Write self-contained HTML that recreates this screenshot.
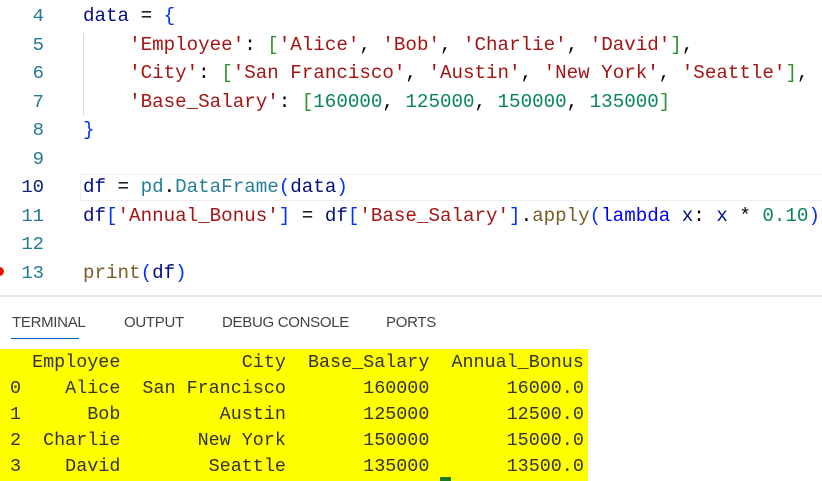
<!DOCTYPE html>
<html><head><style>
body{margin:0;width:822px;height:481px;overflow:hidden;background:#fff;position:relative;font-family:"Liberation Mono",monospace}
.ln{position:absolute;left:0;width:44px;text-align:right;color:#237893;font-size:18.9px;line-height:28.5px}
.code{position:absolute;left:83px;font-size:19.2px;line-height:28.5px;white-space:pre;color:#000}
.s{color:#a31515}.n{color:#098658}.b1{color:#0431fa}.b2{color:#319331}.v{color:#001080}.t{color:#267f99}.f{color:#795e26}.k{color:#0000ff}
.tab{position:absolute;top:314px;font-family:"Liberation Sans",sans-serif;font-size:15px;color:#424242;letter-spacing:-0.3px}
.term{position:absolute;left:0;top:349px;width:588px;height:132px;background:#ffff00}
.tl{position:absolute;left:10px;top:350px;font-size:18.4px;line-height:26px;white-space:pre;color:#333}
</style></head><body>
<div style="position:absolute;left:80px;top:174px;width:742px;height:25px;border:1px solid #eeeeee;border-right:none"></div>
<div style="position:absolute;left:83px;top:33px;width:1px;height:82px;background:#d8d8d8"></div>
<div class="ln" style="top:2px">4<br>5<br>6<br>7<br>8<br>9<br><span style="color:#0b216f">10</span><br>11<br>12<br>13</div>
<div style="position:absolute;left:-5px;top:267px;width:9px;height:9px;border-radius:50%;background:#e51400"></div>
<div class="code" style="top:2px"><span class="v">data</span> = <span class="b1">{</span>
    <span class="s">'Employee'</span>: <span class="b2">[</span><span class="s">'Alice'</span>, <span class="s">'Bob'</span>, <span class="s">'Charlie'</span>, <span class="s">'David'</span><span class="b2">]</span>,
    <span class="s">'City'</span>: <span class="b2">[</span><span class="s">'San Francisco'</span>, <span class="s">'Austin'</span>, <span class="s">'New York'</span>, <span class="s">'Seattle'</span><span class="b2">]</span>,
    <span class="s">'Base_Salary'</span>: <span class="b2">[</span><span class="n">160000</span>, <span class="n">125000</span>, <span class="n">150000</span>, <span class="n">135000</span><span class="b2">]</span>
<span class="b1">}</span>

<span class="v">df</span> = <span class="t">pd</span>.<span class="t">DataFrame</span><span class="b1">(</span><span class="v">data</span><span class="b1">)</span>
<span class="v">df</span><span class="b1">[</span><span class="s">'Annual_Bonus'</span><span class="b1">]</span> = <span class="v">df</span><span class="b1">[</span><span class="s">'Base_Salary'</span><span class="b1">]</span>.<span class="f">apply</span><span class="b1">(</span><span class="k">lambda</span> <span class="v">x</span>: <span class="v">x</span> * <span class="n">0.10</span><span class="b1">)</span>

<span class="f">print</span><span class="b1">(</span><span class="v">df</span><span class="b1">)</span></div>
<div style="position:absolute;left:0;top:295px;width:822px;height:2px;background:#e8e8e8"></div>
<div class="tab" style="left:12px">TERMINAL</div>
<div style="position:absolute;left:11px;top:338px;width:68px;height:1px;background:#005fb8"></div>
<div class="tab" style="left:124px">OUTPUT</div>
<div class="tab" style="left:222px">DEBUG CONSOLE</div>
<div class="tab" style="left:386px">PORTS</div>
<div class="term"></div>
<div class="tl">  Employee           City  Base_Salary  Annual_Bonus
0    Alice  San Francisco       160000       16000.0
1      Bob         Austin       125000       12500.0
2  Charlie       New York       150000       15000.0
3    David        Seattle       135000       13500.0</div>
<div style="position:absolute;left:440px;top:477px;width:11px;height:4px;background:#1a7a1a"></div>
</body></html>
